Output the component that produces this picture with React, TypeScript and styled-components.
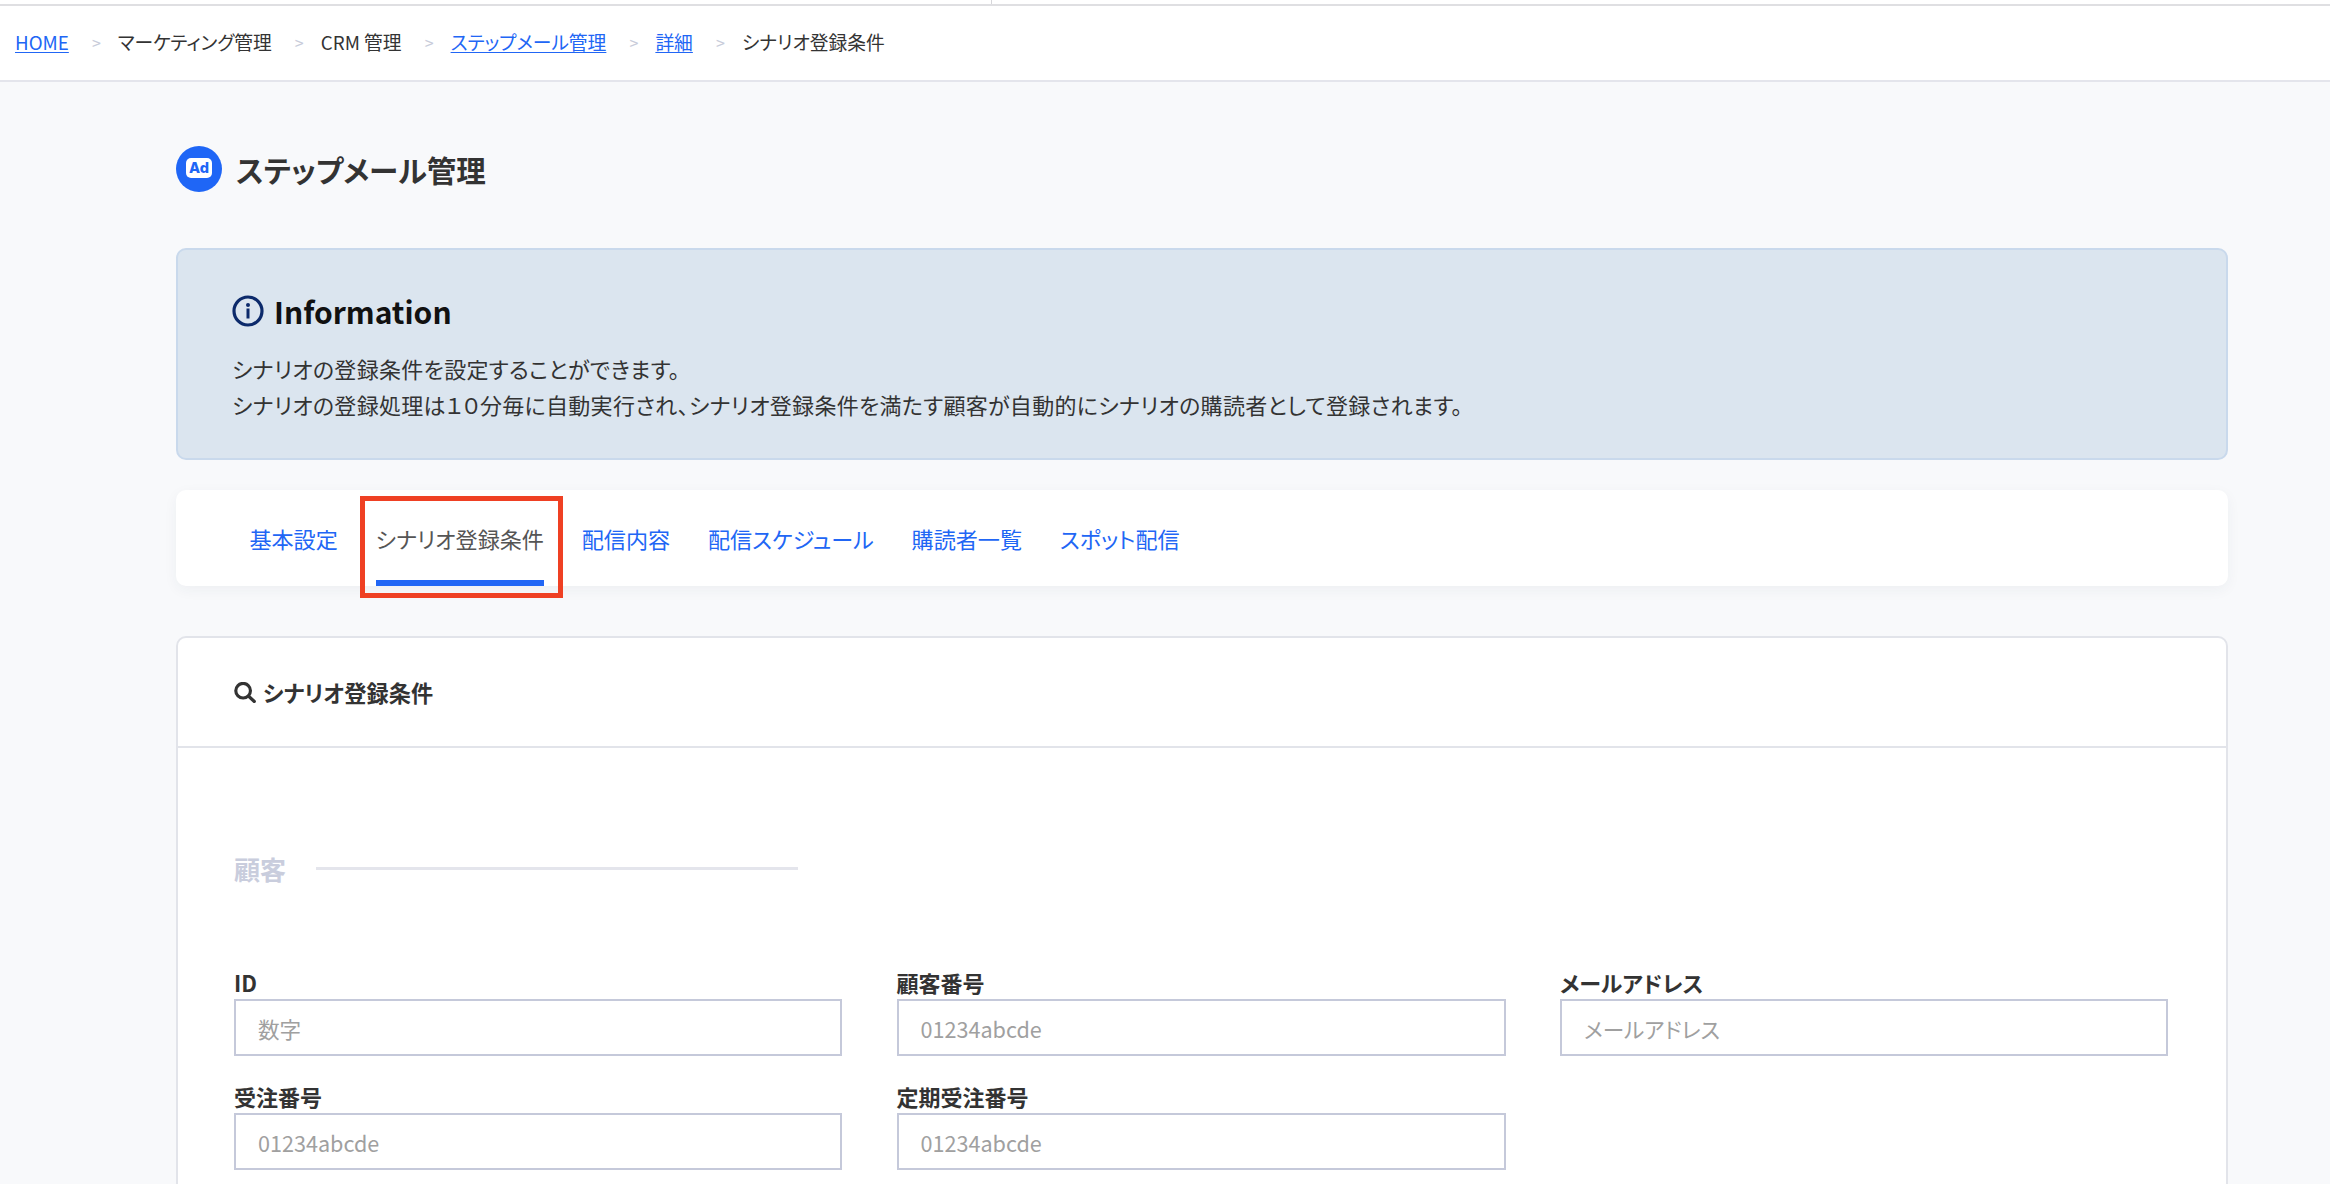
import React from "react";
import styled, { createGlobalStyle } from "styled-components";

const Global = createGlobalStyle`
  html, body { margin: 0; padding: 0; height: 100%; overflow: hidden; }
  body {
    background: #f8f9fb;
    color: #333;
    font-family: "Noto Sans CJK JP", "Noto Sans", sans-serif;
    font-feature-settings: "palt";
  }
  * { box-sizing: border-box; }
`;

const Page = styled.div`
  height: 1184px;
  overflow: hidden;
`;

const TopStrip = styled.div`
  height: 6px;
  background: #fff;
  border-bottom: 2px solid #dfdfe2;
  display: flex;
  padding-left: 991px;
`;

const StripDivider = styled.span`
  width: 1px;
  height: 4px;
  background: #d6d6da;
`;

const Breadcrumb = styled.nav`
  height: 76px;
  background: #fff;
  border-bottom: 2px solid #e4e5ec;
  display: flex;
  align-items: center;
  padding: 0 0 2px 15px;
  font-size: 18.75px;
  line-height: 26px;
  color: #333;
`;

const CrumbLink = styled.a`
  color: #2166f5;
  text-decoration: underline;
  text-underline-offset: 2px;
`;

const CrumbText = styled.span`
  color: #333;
`;

const Sep = styled.span`
  color: #c8ccda;
  font-size: 16px;
  width: 49px;
  text-align: center;
  padding-left: 6px;
`;

const Content = styled.main`
  padding: 64px 102px 0 176px;
`;

const TitleRow = styled.header`
  display: flex;
  align-items: center;
  gap: 14px;
  height: 46px;
`;

const TitleIcon = styled.svg`
  width: 46px;
  height: 46px;
  flex: none;
`;

const Title = styled.h1`
  margin: 0;
  font-size: 29.5px;
  font-weight: 700;
  color: #333;
  line-height: 46px;
`;

const InfoBox = styled.section`
  margin-top: 56px;
  height: 212px;
  background: #dbe5ef;
  border: 2px solid #c9d9ec;
  border-radius: 10px;
  padding: 43px 54px 0;
`;

const InfoHead = styled.div`
  display: flex;
  align-items: center;
  gap: 10px;
  height: 36px;
`;

const InfoIcon = styled.svg`
  width: 32px;
  height: 32px;
  flex: none;
`;

const InfoTitle = styled.h2`
  margin: 0;
  font-family: "Noto Sans CJK JP", sans-serif;
  font-size: 30px;
  font-weight: 700;
  color: #111;
  line-height: 36px;
`;

const InfoText = styled.p`
  margin: 21px 0 0;
  font-size: 22px;
  letter-spacing: 0.3px;
  line-height: 36px;
  color: #333;
`;

const TabBar = styled.div`
  margin-top: 30px;
  height: 96px;
  background: #fff;
  border-radius: 10px;
  box-shadow: 0 4px 14px rgba(40, 50, 80, 0.05);
  display: flex;
  padding-left: 54.5px;
`;

const Tab = styled.a<{ $active?: boolean }>`
  position: relative;
  padding: 0 18.9px;
  height: 96px;
  display: flex;
  align-items: center;
  font-size: 22.1px;
  text-decoration: none;
  color: ${(p) => (p.$active ? "#555" : "#2166f5")};
`;

const TabUnderline = styled.span`
  position: absolute;
  left: 18.9px;
  right: 18.9px;
  bottom: 0;
  height: 6px;
  background: #2166f5;
`;

const Highlight = styled.span`
  position: absolute;
  left: 3px;
  right: 0;
  top: 6px;
  bottom: -12px;
  border: 5px solid #ef4023;
`;

const Card = styled.section`
  margin-top: 50px;
  height: 700px;
  background: #fff;
  border: 2px solid #e2e4ea;
  border-radius: 10px 10px 0 0;
`;

const CardHead = styled.div`
  height: 110px;
  border-bottom: 2px solid #e2e4ea;
  display: flex;
  align-items: center;
  gap: 7px;
  padding: 0 0 0 56px;
  font-size: 22.2px;
  font-weight: 700;
  color: #333;
`;

const SearchIcon = styled.svg`
  width: 22px;
  height: 21px;
  flex: none;
`;

const CardBody = styled.div`
  padding: 101px 58px 0 56px;
`;

const SectionHead = styled.div`
  display: flex;
  align-items: center;
  gap: 30px;
  width: 564px;
  height: 40px;
`;

const SectionTitle = styled.h3`
  margin: 0;
  font-size: 26px;
  font-weight: 700;
  color: #c9cddd;
  line-height: 40px;
`;

const SectionRule = styled.span`
  flex: 1;
  height: 3px;
  margin-bottom: 2px;
  background: #e4e5ec;
`;

const FieldGrid = styled.div`
  margin-top: 76px;
  display: grid;
  grid-template-columns: 608px 609px 608px;
  column-gap: 54.5px;
  row-gap: 23px;
`;

const Field = styled.label`
  display: block;
`;

const FieldLabel = styled.span`
  display: block;
  font-size: 22px;
  font-weight: 700;
  line-height: 34px;
  color: #333;
`;

const FieldInput = styled.input`
  display: block;
  width: 100%;
  height: 57px;
  border: 2px solid #c5c9da;
  background: #fff;
  border-radius: 0;
  padding: 2px 22px 0;
  font: inherit;
  font-size: 21.6px;
  outline: none;
  &::placeholder { color: #a0a0a0; opacity: 1; }
`;

const crumbs: { t: string; link?: boolean }[] = [
  { t: "HOME", link: true },
  { t: "マーケティング管理" },
  { t: "CRM 管理" },
  { t: "ステップメール管理", link: true },
  { t: "詳細", link: true },
  { t: "シナリオ登録条件" },
];

const tabs = ["基本設定", "シナリオ登録条件", "配信内容", "配信スケジュール", "購読者一覧", "スポット配信"];

const fields: { label: string; ph: string }[] = [
  { label: "ID", ph: "数字" },
  { label: "顧客番号", ph: "01234abcde" },
  { label: "メールアドレス", ph: "メールアドレス" },
  { label: "受注番号", ph: "01234abcde" },
  { label: "定期受注番号", ph: "01234abcde" },
];

export default function App() {
  return (
    <Page>
      <Global />
      <TopStrip>
        <StripDivider />
      </TopStrip>
      <Breadcrumb>
        {crumbs.map((c, i) => (
          <React.Fragment key={c.t}>
            {i > 0 && <Sep>&gt;</Sep>}
            {c.link ? <CrumbLink href="#">{c.t}</CrumbLink> : <CrumbText>{c.t}</CrumbText>}
          </React.Fragment>
        ))}
      </Breadcrumb>
      <Content>
        <TitleRow>
          <TitleIcon viewBox="0 0 46 46">
            <circle cx="23" cy="23" r="23" fill="#1f66f6" />
            <rect x="10" y="12" width="26" height="20" rx="5" fill="#fff" />
            <text x="23" y="27" textAnchor="middle" fontSize="14.5" fontWeight="800" fill="#1f66f6" fontFamily="Inter, sans-serif">
              Ad
            </text>
          </TitleIcon>
          <Title>ステップメール管理</Title>
        </TitleRow>

        <InfoBox>
          <InfoHead>
            <InfoIcon viewBox="0 0 32 32">
              <circle cx="16" cy="16" r="14" fill="none" stroke="#0c2a6b" strokeWidth="3.2" />
              <circle cx="16" cy="10" r="2" fill="#0c2a6b" />
              <rect x="14.5" y="13.5" width="3" height="10" fill="#0c2a6b" />
            </InfoIcon>
            <InfoTitle>Information</InfoTitle>
          </InfoHead>
          <InfoText>
            シナリオの登録条件を設定することができます。
            <br />
            シナリオの登録処理は１０分毎に自動実行され、シナリオ登録条件を満たす顧客が自動的にシナリオの購読者として登録されます。
          </InfoText>
        </InfoBox>

        <TabBar>
          {tabs.map((t, i) => (
            <Tab key={t} href="#" $active={i === 1}>
              {t}
              {i === 1 && <TabUnderline />}
              {i === 1 && <Highlight />}
            </Tab>
          ))}
        </TabBar>

        <Card>
          <CardHead>
            <SearchIcon viewBox="0 0 21 20">
              <circle cx="8.7" cy="8.3" r="7" fill="none" stroke="#333" strokeWidth="3" />
              <line x1="14" y1="13.6" x2="19.4" y2="18.6" stroke="#333" strokeWidth="3" strokeLinecap="round" />
            </SearchIcon>
            シナリオ登録条件
          </CardHead>
          <CardBody>
            <SectionHead>
              <SectionTitle>顧客</SectionTitle>
              <SectionRule />
            </SectionHead>
            <FieldGrid>
              {fields.map((f) => (
                <Field key={f.label}>
                  <FieldLabel>{f.label}</FieldLabel>
                  <FieldInput placeholder={f.ph} readOnly />
                </Field>
              ))}
            </FieldGrid>
          </CardBody>
        </Card>
      </Content>
    </Page>
  );
}
